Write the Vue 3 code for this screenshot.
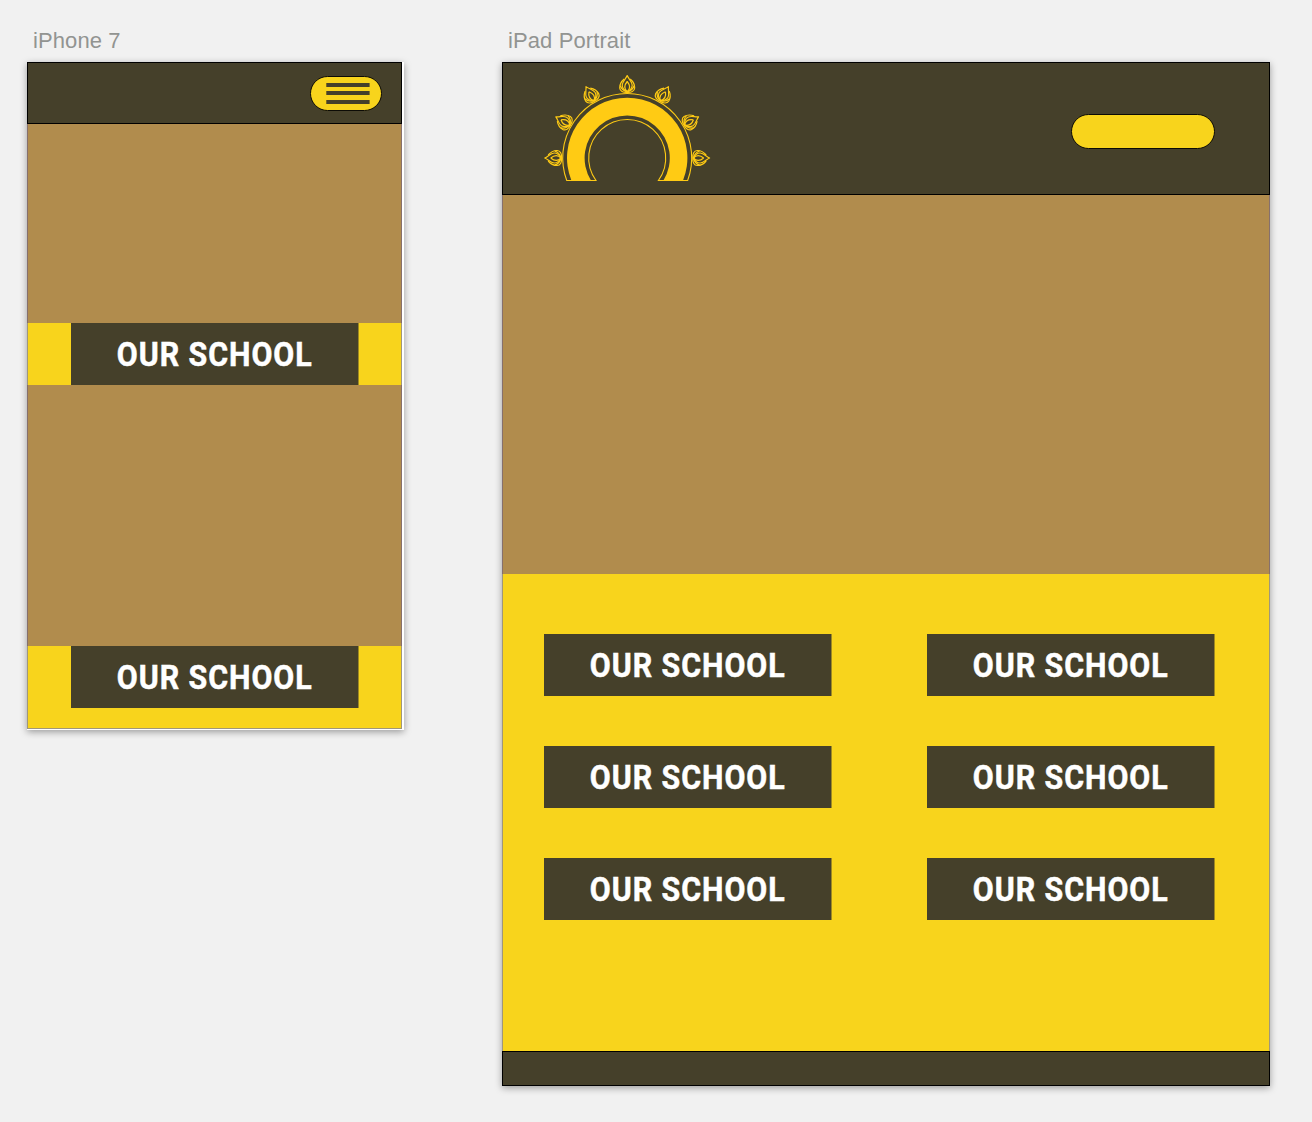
<script setup>
const label = 'OUR SCHOOL'
const leafAngles = [-90, -60, -30, 0, 30, 60, 90]
</script>

<template>
  <main class="canvas">
    <section class="frame phone">
      <h2 class="title">iPhone 7</h2>
      <div class="artboard">
        <div class="screen">
          <header class="bar phone-bar">
            <button class="pill menu" aria-label="Menu">
              <svg width="70" height="33" viewBox="0 0 70 33">
                <path d="M15.300 8H58.600M15.300 16H58.600M15.300 25H58.600" stroke="#45402a" stroke-width="4" />
              </svg>
            </button>
          </header>
          <div class="photo first"></div>
          <div class="band"><a class="button"><span>{{ label }}</span></a></div>
          <div class="photo second"></div>
          <div class="band last"><a class="button"><span>{{ label }}</span></a></div>
        </div>
      </div>
    </section>

    <section class="frame tablet">
      <h2 class="title">iPad Portrait</h2>
      <div class="artboard">
        <div class="screen">
          <header class="bar tablet-bar">
            <svg class="logo" width="170" height="112" viewBox="-85.200 -85 170 112">
              <defs>
                <g id="leaf" fill="none" stroke="#ffcb14" stroke-width="1.2" stroke-linejoin="round">
                  <path d="M0-82.400C-1.500-79-4.800-76.500-5-73C-5.100-70-2.500-67.500 0-66.200C2.500-67.500 5.100-70 5-73C4.800-76.500 1.500-79 0-82.400Z" />
                  <path d="M-3-79C-6-76.500-7.600-73-7.500-70C-7.300-66.800-4-65.300 0-65.600C4-65.300 7.300-66.800 7.500-70C7.600-73 6-76.500 3-79" />
                  <path d="M0-76.500C-2.900-73-3-69 0-66.200C3-69 2.900-73 0-76.500" />
                  <path d="M-7-72.500C-6-69-3.500-67 0-66.200C3.500-67 6-69 7-72.500" />
                </g>
              </defs>
              <path d="M-60.450 22.500A64.500 64.500 0 1 1 60.450 22.500H31.200A38.500 38.500 0 1 0-31.200 22.500Z" fill="none" stroke="#ffcb14" stroke-width="1.1" />
              <path d="M-55.800 22.500A60.200 60.200 0 1 1 55.800 22.500H36.200A42.600 42.600 0 1 0-36.200 22.500Z" fill="#ffcb14" />
              <use v-for="angle in leafAngles" :key="angle" href="#leaf" :transform="`rotate(${angle})`" />
            </svg>
            <div class="pill wide"></div>
          </header>
          <div class="photo hero"></div>
          <div class="grid">
            <a v-for="n in 6" :key="n" class="button"><span>{{ label }}</span></a>
          </div>
          <footer class="bar footer"></footer>
        </div>
      </div>
    </section>
  </main>
</template>

<style>
body {
  background: #f1f1f1;
}
</style>

<style scoped>
* {
  box-sizing: border-box;
}
.canvas {
  display: flex;
  align-items: flex-start;
  gap: 98px;
  height: 1122px;
  padding: 26px 0 0 27px;
  background: #f1f1f1;
  overflow: hidden;
}
.title {
  margin: 0;
  height: 36px;
  padding-left: 6px;
  font: 400 22px/30px "Liberation Sans", Arial, sans-serif;
  letter-spacing: 0.1px;
  color: #929491;
  white-space: nowrap;
}
.artboard {
  background: #fff;
  box-shadow: 0 2px 7px rgba(0, 0, 0, 0.36);
}
.phone .artboard {
  width: 377px;
  height: 668px;
}
.tablet .artboard {
  width: 768px;
  height: 1024px;
}
.screen {
  display: flex;
  flex-direction: column;
}
.phone .screen {
  width: 375px;
}
.bar {
  background: #45402a;
  border: 1px solid #000;
  display: flex;
}
.phone-bar {
  height: 62px;
  justify-content: flex-end;
  padding: 13px 19px 0 0;
}
.tablet-bar {
  height: 133px;
  justify-content: space-between;
  padding: 10px 54px 0 39px;
}
.logo {
  display: block;
}
.pill {
  height: 35px;
  padding: 0;
  border: 1px solid #0c0b06;
  border-radius: 18px;
  background: #f8d41c;
}
.pill svg {
  display: block;
}
.menu {
  width: 72px;
}
.wide {
  width: 144px;
  margin-top: 41px;
}
.photo {
  background: #b18c4d;
  border: solid #86706c;
  border-width: 0 1px;
}
.first {
  height: 199px;
}
.second {
  height: 261px;
}
.hero {
  height: 379px;
}
.band {
  height: 62px;
  padding-left: 43px;
  background: #f8d41c;
  border: solid #a0977a;
  border-width: 0 1px;
}
.last {
  height: 83px;
  border-bottom-width: 1px;
}
.button {
  display: flex;
  align-items: center;
  justify-content: center;
  width: 288px;
  height: 62px;
  padding: 2px 0 0 0;
  background: linear-gradient(90deg, #45402a 287px, #9e8923 287px);
  color: #fff;
  font: 700 32.500px/60px Roboto, sans-serif;
  letter-spacing: 1px;
  white-space: nowrap;
  -webkit-text-stroke: 0.5px #fff;
}
.button span {
  transform: scaleX(0.935);
}
.grid {
  display: grid;
  grid-template-columns: 288px 288px;
  column-gap: 95px;
  grid-auto-rows: 62px;
  row-gap: 50px;
  height: 477px;
  padding: 60px 0 0 41px;
  background: #f8d41c;
  border: solid #a0977a;
  border-width: 0 1px;
}
.footer {
  height: 35px;
}
</style>
